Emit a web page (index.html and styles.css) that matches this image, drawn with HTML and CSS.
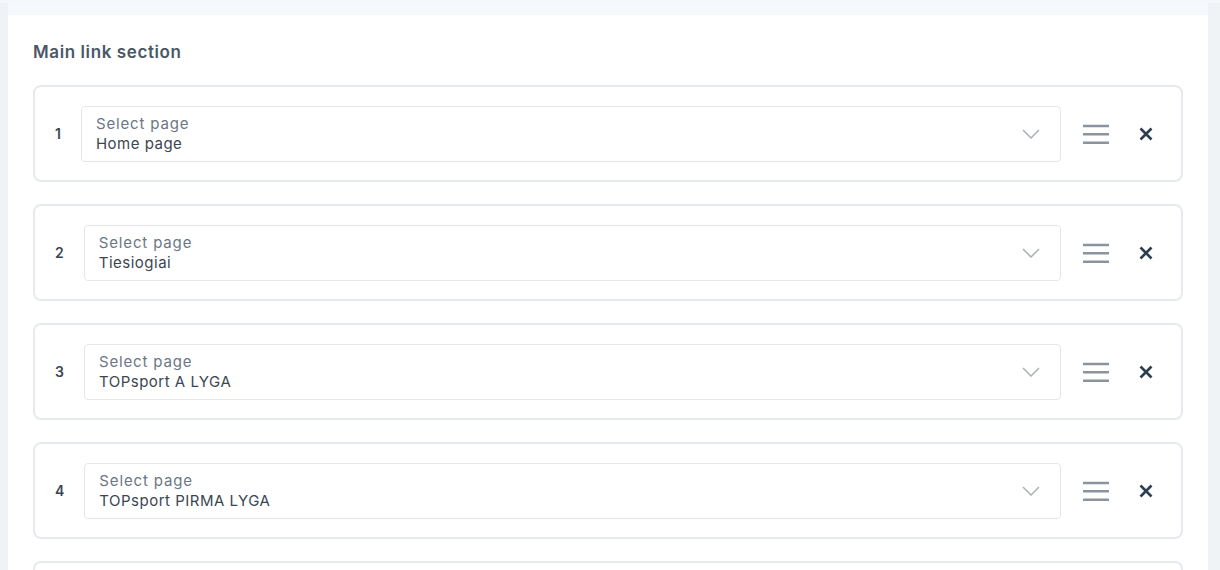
FILE: index.html
```html
<!DOCTYPE html>
<html>
<head>
<meta charset="utf-8">
<link rel="stylesheet" href="styles.css">
</head>
<body>
<div class="page">
  <div class="prev"></div>
  <section class="panel">
    <h2 class="title">Main link section</h2>
    <div class="list">
      <div class="card">
        <span class="num">1</span>
        <div class="select">
          <div class="labels"><span class="label">Select page</span><span class="value">Home page</span></div>
          <svg class="chev" width="18" height="10" viewBox="0 0 18 10"><path d="M1 1l8 8 8-8" fill="none" stroke="#a9b0b8" stroke-width="1.5"/></svg>
        </div>
        <svg class="drag" width="26" height="20" viewBox="0 0 26 20"><path d="M0 2h26M0 10.3h26M0 18.7h26" stroke="#8b949e" stroke-width="2.6"/></svg>
        <svg class="close" width="14" height="14" viewBox="0 0 14 14"><path d="M1.5 1.5l11 11M12.5 1.5l-11 11" stroke="#2d3e50" stroke-width="2.6"/></svg>
      </div>
      <div class="card">
        <span class="num">2</span>
        <div class="select">
          <div class="labels"><span class="label">Select page</span><span class="value">Tiesiogiai</span></div>
          <svg class="chev" width="18" height="10" viewBox="0 0 18 10"><path d="M1 1l8 8 8-8" fill="none" stroke="#a9b0b8" stroke-width="1.5"/></svg>
        </div>
        <svg class="drag" width="26" height="20" viewBox="0 0 26 20"><path d="M0 2h26M0 10.3h26M0 18.7h26" stroke="#8b949e" stroke-width="2.6"/></svg>
        <svg class="close" width="14" height="14" viewBox="0 0 14 14"><path d="M1.5 1.5l11 11M12.5 1.5l-11 11" stroke="#2d3e50" stroke-width="2.6"/></svg>
      </div>
      <div class="card">
        <span class="num">3</span>
        <div class="select">
          <div class="labels"><span class="label">Select page</span><span class="value">TOPsport A LYGA</span></div>
          <svg class="chev" width="18" height="10" viewBox="0 0 18 10"><path d="M1 1l8 8 8-8" fill="none" stroke="#a9b0b8" stroke-width="1.5"/></svg>
        </div>
        <svg class="drag" width="26" height="20" viewBox="0 0 26 20"><path d="M0 2h26M0 10.3h26M0 18.7h26" stroke="#8b949e" stroke-width="2.6"/></svg>
        <svg class="close" width="14" height="14" viewBox="0 0 14 14"><path d="M1.5 1.5l11 11M12.5 1.5l-11 11" stroke="#2d3e50" stroke-width="2.6"/></svg>
      </div>
      <div class="card">
        <span class="num">4</span>
        <div class="select">
          <div class="labels"><span class="label">Select page</span><span class="value">TOPsport PIRMA LYGA</span></div>
          <svg class="chev" width="18" height="10" viewBox="0 0 18 10"><path d="M1 1l8 8 8-8" fill="none" stroke="#a9b0b8" stroke-width="1.5"/></svg>
        </div>
        <svg class="drag" width="26" height="20" viewBox="0 0 26 20"><path d="M0 2h26M0 10.3h26M0 18.7h26" stroke="#8b949e" stroke-width="2.6"/></svg>
        <svg class="close" width="14" height="14" viewBox="0 0 14 14"><path d="M1.5 1.5l11 11M12.5 1.5l-11 11" stroke="#2d3e50" stroke-width="2.6"/></svg>
      </div>
      <div class="card card-last"></div>
    </div>
  </section>
</div>
</body>
</html>
```
FILE: styles.css
```css
html, body {
  margin: 0;
  padding: 0;
}
body {
  background: #eff3f6;
  border-top: 3px solid #f5f8fa;
  font-family: Inter, "Open Sans", sans-serif;
  height: 567px;
  overflow: hidden;
}
.page {
  padding: 0 12px 0 8px;
}
.prev {
  height: 12px;
  background: #f5f9fd;
}
.panel {
  background: #ffffff;
  padding: 25px 25px 40px;
}
.title {
  margin: 0 0 21px;
  font-size: 17px;
  line-height: 24px;
  font-weight: 600;
  letter-spacing: 0.6px;
  color: #4a5866;
}
.list {
  display: flex;
  flex-direction: column;
  gap: 22px;
}
.card {
  display: flex;
  align-items: center;
  border: 2px solid #e6eaee;
  border-radius: 8px;
  padding: 19px 28px 19px 20px;
  height: 55px;
}
.num {
  font-size: 14px;
  font-weight: 600;
  color: #3a4654;
  margin-right: 20px;
}
.select {
  flex: 1;
  display: flex;
  align-items: center;
  height: 53px;
  border: 1px solid #e3e7eb;
  border-radius: 4px;
  padding: 1px 20px 0 14px;
}
.labels {
  flex: 1;
  display: flex;
  flex-direction: column;
  font-size: 15px;
  line-height: 20px;
}
.label {
  color: #6b7785;
  letter-spacing: 0.85px;
}
.value {
  color: #3b4652;
  letter-spacing: 0.5px;
}
.chev {
  flex: none;
}
.drag {
  flex: none;
  margin-left: 22px;
}
.close {
  flex: none;
  margin-left: 30px;
}
```
